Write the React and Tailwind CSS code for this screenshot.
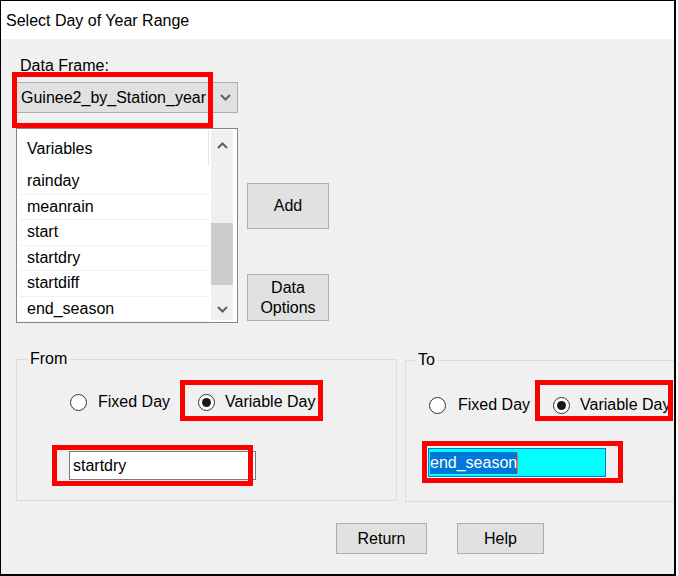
const font = { fontFamily: '"Liberation Sans", Arial, sans-serif' };

function Radio({ checked, label, gap = 'ml-[11px]' }) {
  return (
    <div className="flex items-center">
      <div className="w-[17px] h-[17px] rounded-full border border-[#333333] bg-white flex items-center justify-center">
        {checked && <div className="w-[9px] h-[9px] rounded-full bg-[#1a1a1a]" />}
      </div>
      <span className={`${gap} text-[16px] leading-[18px]`}>{label}</span>
    </div>
  );
}

function Chevron({ up, className }) {
  return (
    <svg width="11" height="7" viewBox="0 0 11 7" className={className}>
      <polyline
        points={up ? '1,6 5.5,1.5 10,6' : '1,1 5.5,5.5 10,1'}
        fill="none"
        stroke="#606060"
        strokeWidth="2"
      />
    </svg>
  );
}

function Button({ children, className }) {
  return (
    <div
      className={`bg-[#e1e1e1] border border-[#adadad] flex flex-col items-center justify-center text-[16px] leading-[20px] ${className}`}
    >
      {children}
    </div>
  );
}

const variables = ['rainday', 'meanrain', 'start', 'startdry', 'startdiff', 'end_season'];

export default function App() {
  return (
    <div
      className="relative w-[676px] h-[576px] border-l border-t border-r-2 border-b-2 border-black bg-[#f0f0f0] overflow-hidden text-black"
      style={font}
    >
      <div className="h-[38px] bg-white flex items-center pl-[5px] pt-[2px] text-[16px]">Select Day of Year Range</div>

      <div className="pl-[15px] pt-[18px] flex flex-col">
        <div className="ml-[4px] text-[16px] leading-[18px]">Data Frame:</div>

        <div className="mt-[7px] w-[222px] h-[31px] bg-[#e1e1e1] border border-[#adadad] flex items-center">
          <span className="pl-[4px] text-[16px] flex-1">Guinee2_by_Station_year</span>
          <Chevron className="mr-[6px]" />
        </div>

        <div className="mt-[15px] flex">
          <div className="w-[222px] h-[195px] bg-white border border-[#82878f] flex">
            <div className="flex-1 flex flex-col">
              <div className="h-[40px] flex items-center relative">
                <span className="pl-[10px] text-[16px]">Variables</span>
                <div className="absolute right-0 top-[1px] bottom-[3px] w-px bg-[#e5e5e5]" />
              </div>
              {variables.map((v) => (
                <div
                  key={v}
                  className="ml-[2px] h-[25.5px] flex items-center border-b border-[#f0f0f0] text-[16px] pl-[8px]"
                >
                  {v}
                </div>
              ))}
            </div>
            <div className="ml-[2px] mr-[4px] mt-[1px] mb-[2px] w-[22px] bg-[#f0f0f0] flex flex-col items-center">
              <Chevron up className="mt-[12px]" />
              <div className="mt-[74px] w-[22px] h-[62px] bg-[#cdcdcd]" />
              <Chevron className="mt-[21px]" />
            </div>
          </div>

          <div className="ml-[9px] flex flex-col">
            <Button className="mt-[55px] w-[82px] h-[46px]">Add</Button>
            <Button className="mt-[45px] w-[82px] h-[47px]">
              <span>Data</span>
              <span>Options</span>
            </Button>
          </div>
        </div>

        <div className="mt-[27px] flex">
          <fieldset className="shrink-0 w-[381px] h-[151px] border border-[#dcdcdc]">
            <legend className="ml-[10px] px-[3px] text-[16px] leading-[18px]">From</legend>
            <div className="mt-[25px] pl-[53px] flex">
              <Radio label="Fixed Day" />
              <div className="ml-[28px]">
                <Radio checked label="Variable Day" gap="ml-[10px]" />
              </div>
            </div>
            <div className="mt-[40px] ml-[52px] w-[187px] h-[29px] bg-white border border-[#7a7a7a] flex items-center pl-[3px] text-[16px]">
              startdry
            </div>
          </fieldset>

          <fieldset className="shrink-0 ml-[8px] w-[290px] h-[151px] border border-[#dcdcdc] mt-[1px]">
            <legend className="ml-[9px] px-[3px] text-[16px] leading-[18px]">To</legend>
            <div className="mt-[27px] pl-[23px] flex">
              <Radio label="Fixed Day" gap="ml-[12px]" />
              <div className="ml-[23px]">
                <Radio checked label="Variable Day" gap="ml-[10px]" />
              </div>
            </div>
            <div className="mt-[34px] ml-[22px] w-[178px] h-[29px] bg-[#00ffff] border border-[#0078d7] flex items-center pl-[1px] text-[16px]">
              <span className="bg-[#0078d7] text-white leading-[22px]">end_season</span>
              <span className="w-px h-[20px] bg-[#e07020]" />
            </div>
          </fieldset>
        </div>

        <div className="mt-[21px] flex">
          <Button className="ml-[320px] w-[91px] h-[31px]">Return</Button>
          <Button className="ml-[30px] w-[87px] h-[31px]">Help</Button>
        </div>
      </div>

      <div className="absolute left-[11px] top-[71px] w-[201px] h-[56px] border-[5px] border-[#ff0000]" />
      <div className="absolute left-[179px] top-[379px] w-[143px] h-[41px] border-[5px] border-[#ff0000]" />
      <div className="absolute left-[51px] top-[444px] w-[201px] h-[41px] border-[5px] border-[#ff0000]" />
      <div className="absolute left-[534px] top-[379px] w-[138px] h-[41px] border-[5px] border-[#ff0000]" />
      <div className="absolute left-[421px] top-[440px] w-[201px] h-[42px] border-[5px] border-[#ff0000]" />
    </div>
  );
}
